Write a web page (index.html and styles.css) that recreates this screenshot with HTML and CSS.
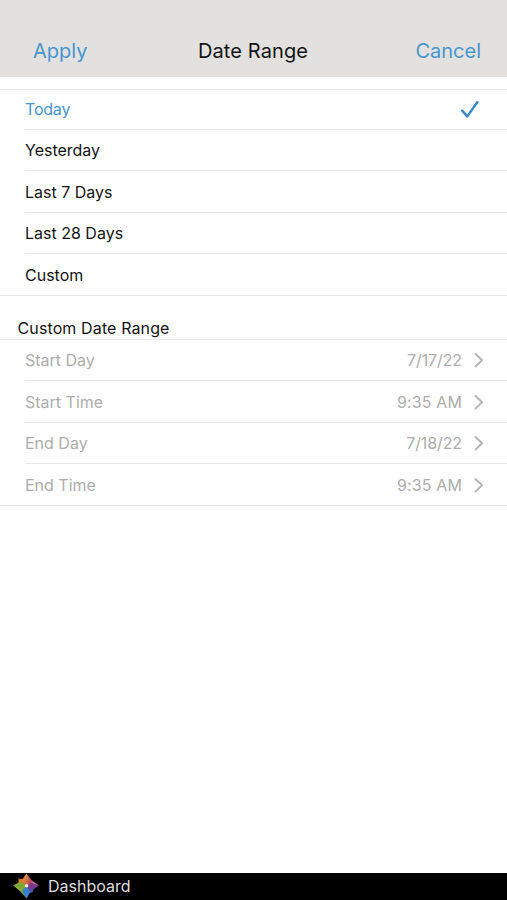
FILE: index.html
```html
<!DOCTYPE html>
<html lang="en">
<head>
<meta charset="utf-8">
<title>Date Range</title>
<link rel="stylesheet" href="styles.css">
</head>
<body>
<div class="screen">
  <header class="nav">
    <a class="nav-action apply">Apply</a>
    <h1 class="nav-title">Date Range</h1>
    <a class="nav-action cancel">Cancel</a>
  </header>
  <main class="content">
    <ul class="list">
      <li class="row selected"><span class="today">Today</span>
        <svg class="check" width="20" height="20" viewBox="0 0 20 20"><path d="M2.2 11.6 7.3 17.4 17.4 3"/></svg></li>
      <li class="row"><span>Yesterday</span></li>
      <li class="row"><span>Last 7 Days</span></li>
      <li class="row"><span>Last 28 Days</span></li>
      <li class="row"><span>Custom</span></li>
    </ul>
    <h2 class="section-title">Custom Date Range</h2>
    <ul class="list disabled">
      <li class="row"><span>Start Day</span><span class="value">7/17/22</span><svg class="chevron" width="10" height="16" viewBox="0 0 10 16"><path d="M1.5 2 8 8.3 1.5 14.6"/></svg></li>
      <li class="row"><span>Start Time</span><span class="value time">9:35 AM</span><svg class="chevron" width="10" height="16" viewBox="0 0 10 16"><path d="M1.5 2 8 8.3 1.5 14.6"/></svg></li>
      <li class="row"><span>End Day</span><span class="value">7/18/22</span><svg class="chevron" width="10" height="16" viewBox="0 0 10 16"><path d="M1.5 2 8 8.3 1.5 14.6"/></svg></li>
      <li class="row"><span>End Time</span><span class="value time">9:35 AM</span><svg class="chevron" width="10" height="16" viewBox="0 0 10 16"><path d="M1.5 2 8 8.3 1.5 14.6"/></svg></li>
    </ul>
  </main>
  <footer class="footer">
    <svg class="logo" width="26" height="26" viewBox="0 0 26 26">
      <defs>
        <linearGradient id="top" x1="0" y1="0" x2="1" y2="1"><stop offset="0" stop-color="#e0b45c"/><stop offset="1" stop-color="#c4302f"/></linearGradient>
        <linearGradient id="right" x1="0" y1="0" x2="1" y2="1"><stop offset="0" stop-color="#a82840"/><stop offset="1" stop-color="#c983c4"/></linearGradient>
        <linearGradient id="bottom" x1="1" y1="0" x2="0" y2="1"><stop offset="0" stop-color="#5c2f8a"/><stop offset="1" stop-color="#3b83cc"/></linearGradient>
        <linearGradient id="left" x1="0" y1="0" x2="1" y2="1"><stop offset="0" stop-color="#c9bf3e"/><stop offset="1" stop-color="#2b9a55"/></linearGradient>
      </defs>
      <path fill="#d5801f" d="M13.5 0.5 13 13 0.5 12.5 5.5 9.5 5.5 5.5 9.5 6Z"/>
      <path fill="url(#right)" d="M13.5 0.5 18.5 7 25.8 12.5 13 13Z"/>
      <path fill="url(#bottom)" d="M25.8 12.5 20.5 16.5 19.5 19.5 17 19.8 13.5 25.5 13 13Z"/>
      <path fill="url(#left)" d="M0.5 12.5 13 13 13.5 25.5 7.5 18.5Z"/>
      <path fill="url(#top)" d="M13.5 0.5 18 9 13 13 9.5 8.5Z"/>
      <path fill="#7d358f" d="M25.8 12.5 17 17 13 13 17.5 9.5Z"/>
      <path fill="#397fce" d="M13.5 25.5 9.5 18 13 13 17 18Z"/>
      <path fill="#78a833" d="M0.5 12.5 8.5 9 13 13 9.5 17Z"/>
      <circle cx="13.7" cy="12.8" r="1.8" fill="#fff3df"/>
    </svg>
    <span class="footer-label">Dashboard</span>
  </footer>
</div>
</body>
</html>
```

FILE: styles.css
```css
* { box-sizing: border-box; }
body { margin: 0; background: #fff; color: #141414; font-family: Inter, "Liberation Sans", sans-serif; }
.screen { height: 900px; display: flex; flex-direction: column; overflow: hidden; }
.nav {
  height: 76.5px; flex: none; padding: 25px 26px 0 33px; background: #e2e1df;
  display: grid; grid-template-columns: 1fr auto 1fr; align-items: center;
}
.nav-action, .nav-title { margin: 0; font-size: 20px; font-weight: 400; line-height: 26px; }
.nav-action { color: #4796d0; }
.nav-title { padding-right: 8px; letter-spacing: 0.12px; }
.cancel { text-align: right; }
.content { flex: 1; padding-top: 12px; }
.list { list-style: none; margin: 0; padding: 0; border-top: 1px solid #ededed; border-bottom: 1px solid #e8e8e8; }
.row {
  height: 41.4px; margin-left: 25px; padding-right: 23px;
  display: flex; align-items: center; font-size: 16px; line-height: 20px;
  border-bottom: 1px solid #e9e9e9;
}
.row:last-child { height: 40.6px; border-bottom: 0; }
.selected { height: 40.6px; color: #4796d0; }
.today { letter-spacing: -0.2px; }
.check { margin-left: auto; margin-right: 4px; fill: none; stroke: #388ccb; stroke-width: 2.5; stroke-linecap: round; stroke-linejoin: round; }
.section-title { margin: 0; height: 43.2px; padding: 22px 0 0 17.5px; font-size: 16px; font-weight: 400; line-height: 20px; letter-spacing: 0.12px; }
.disabled { color: #adadad; }
.value { margin-left: auto; margin-right: 12px; letter-spacing: -0.1px; }
.time { letter-spacing: 0.12px; }
.chevron { fill: none; stroke: #b4b4b4; stroke-width: 1.9; stroke-linecap: round; stroke-linejoin: round; }
.footer { height: 27.5px; flex: none; background: #000; color: #dedede; padding-left: 13px; display: flex; align-items: center; gap: 9px; }
.footer-label { font-size: 16px; line-height: 20px; }
```
